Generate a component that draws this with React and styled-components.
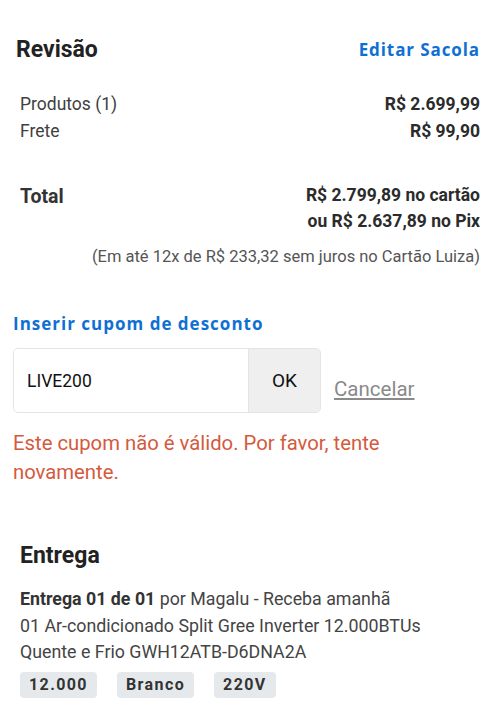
import React from 'react';
import styled, { createGlobalStyle } from 'styled-components';

const GlobalStyle = createGlobalStyle`
  html, body {
    margin: 0;
    padding: 0;
    background: #ffffff;
    font-family: Roboto, "Liberation Sans", sans-serif;
    color: #404040;
  }
`;

const Page = styled.div`
  width: 500px;
  height: 727px;
  overflow: hidden;
  box-sizing: border-box;
`;

const Header = styled.div`
  display: flex;
  justify-content: space-between;
  align-items: center;
  padding: 34px 20px 0 16px;
  height: 30px;
`;

const Title = styled.h2`
  margin: 0;
  font-size: 23px;
  font-weight: 700;
  color: #222;
`;

const LinkBlue = styled.a`
  font-family: "Open Sans", Roboto, sans-serif;
  font-size: 17px;
  font-weight: 700;
  color: #0f70d4;
  letter-spacing: 0.9px;
  text-decoration: none;
`;

const Summary = styled.div`
  padding: 27px 20px 0 20px;
  display: flex;
  flex-direction: column;
`;

const Row = styled.div`
  display: flex;
  justify-content: space-between;
  align-items: flex-start;
  font-size: 17.5px;
  line-height: 27px;
`;

const Value = styled.span`
  font-weight: 700;
  color: #2b2b2b;
  text-align: right;
  line-height: ${(p) => p.lh || 27}px;
`;

const TotalRow = styled(Row)`
  margin-top: 37px;
`;

const TotalLabel = styled.span`
  font-size: 19.5px;
  font-weight: 700;
  color: #333;
  line-height: 30px;
`;

const Note = styled.div`
  text-align: right;
  font-size: 16.5px;
  color: #555;
  margin-top: 13px;
`;

const Coupon = styled.div`
  padding: 46px 13px 0 13px;
`;

const CouponTitle = styled(LinkBlue)`
  display: block;
  letter-spacing: 1px;
`;

const CouponRow = styled.div`
  display: flex;
  align-items: center;
  margin-top: 13px;
  gap: 13px;
`;

const InputBox = styled.div`
  display: flex;
  width: 308px;
  height: 65px;
  border: 1px solid #e4e4e4;
  border-radius: 5px;
  box-sizing: border-box;
  overflow: hidden;
`;

const CodeField = styled.div`
  flex: 1;
  display: flex;
  align-items: center;
  padding-left: 13px;
  font-size: 17.5px;
  color: #111;
  background: #fff;
`;

const OkButton = styled.div`
  width: 71px;
  display: flex;
  align-items: center;
  justify-content: center;
  background: #efefef;
  border-left: 1px solid #e4e4e4;
  font-size: 19px;
  color: #111;
`;

const Cancel = styled.a`
  font-size: 20.5px;
  color: #8a8a8a;
  text-decoration: underline;
  margin-top: 16px;
`;

const ErrorText = styled.p`
  margin: 16px 0 0 0;
  font-size: 20.3px;
  line-height: 29px;
  color: #d45a3e;
`;

const Delivery = styled.div`
  padding: 55px 20px 0 20px;
`;

const DeliveryText = styled.div`
  margin-top: 17px;
  font-size: 17.8px;
  line-height: 26.5px;
  color: #444;

  b {
    color: #333;
  }
`;

const Tags = styled.div`
  display: flex;
  gap: 20px;
  margin-top: 6px;
`;

const Tag = styled.span`
  background: #e6e9ec;
  border-radius: 4px;
  height: 26px;
  padding: 0 9px;
  display: flex;
  align-items: center;
  font-size: 16px;
  font-weight: 700;
  letter-spacing: 1.4px;
  color: #333;
`;

export default function App() {
  return (
    <Page>
      <GlobalStyle />
      <Header>
        <Title>Revisão</Title>
        <LinkBlue href="#">Editar Sacola</LinkBlue>
      </Header>
      <Summary>
        <Row>
          <span>Produtos (1)</span>
          <Value>R$ 2.699,99</Value>
        </Row>
        <Row>
          <span>Frete</span>
          <Value>R$ 99,90</Value>
        </Row>
        <TotalRow>
          <TotalLabel>Total</TotalLabel>
          <Value lh={26}>
            R$ 2.799,89 no cartão
            <br />
            ou R$ 2.637,89 no Pix
          </Value>
        </TotalRow>
        <Note>(Em até 12x de R$ 233,32 sem juros no Cartão Luiza)</Note>
      </Summary>
      <Coupon>
        <CouponTitle>Inserir cupom de desconto</CouponTitle>
        <CouponRow>
          <InputBox>
            <CodeField>LIVE200</CodeField>
            <OkButton>OK</OkButton>
          </InputBox>
          <Cancel>Cancelar</Cancel>
        </CouponRow>
        <ErrorText>
          Este cupom não é válido. Por favor, tente
          <br />
          novamente.
        </ErrorText>
      </Coupon>
      <Delivery>
        <Title>Entrega</Title>
        <DeliveryText>
          <b>Entrega 01 de 01</b> por Magalu - Receba amanhã
          <br />
          01 Ar-condicionado Split Gree Inverter 12.000BTUs
          <br />
          Quente e Frio GWH12ATB-D6DNA2A
        </DeliveryText>
        <Tags>
          <Tag>12.000</Tag>
          <Tag>Branco</Tag>
          <Tag>220V</Tag>
        </Tags>
      </Delivery>
    </Page>
  );
}
